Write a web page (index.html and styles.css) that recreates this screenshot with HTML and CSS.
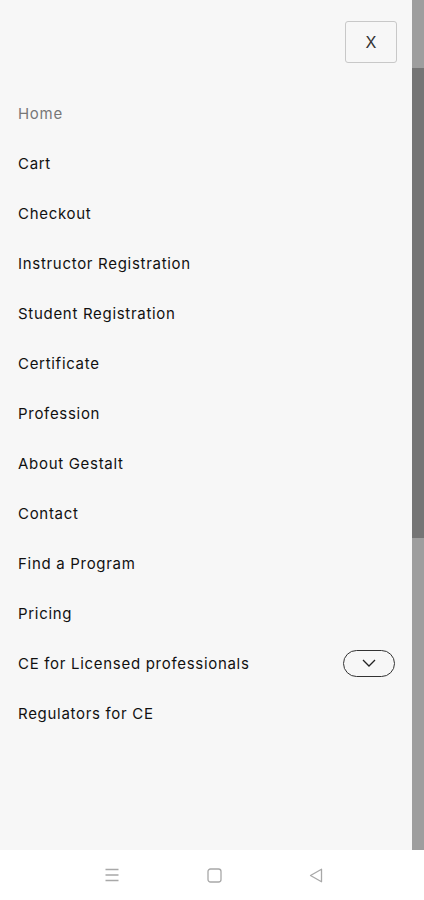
FILE: index.html
```html
<!DOCTYPE html>
<html lang="en">
<head>
    <meta charset="UTF-8">
    <meta name="viewport" content="width=device-width, initial-scale=1.0">
    <title>Menu</title>
    <link rel="stylesheet" href="styles.css">
</head>
<body>
  <div class="screen">
    <!-- Side menu -->
    <div class="menu">
      <div class="menu-header">
        <button class="close-btn">X</button>
      </div>
      <ul class="menu-list">
        <li class="active"><a href="#">Home</a></li>
        <li><a href="#">Cart</a></li>
        <li><a href="#">Checkout</a></li>
        <li><a href="#">Instructor Registration</a></li>
        <li><a href="#">Student Registration</a></li>
        <li><a href="#">Certificate</a></li>
        <li><a href="#">Profession</a></li>
        <li><a href="#">About Gestalt</a></li>
        <li><a href="#">Contact</a></li>
        <li><a href="#">Find a Program</a></li>
        <li><a href="#">Pricing</a></li>
        <li class="has-sub">
          <a href="#">CE for Licensed professionals</a>
          <span class="toggle">
            <svg width="14" height="8" viewBox="0 0 14 8"><path d="M1 1l6 6 6-6" fill="none" stroke="#222" stroke-width="1.3"/></svg>
          </span>
        </li>
        <li><a href="#">Regulators for CE</a></li>
      </ul>
    </div>
    <!-- Scrollbar -->
    <div class="scrollbar">
      <div class="thumb"></div>
    </div>
  </div>

  <!-- System nav -->
  <div class="sysnav">
    <svg width="16" height="14" viewBox="0 0 16 14"><path d="M1.5 1.5h13M1.5 7h13M1.5 12.5h13" stroke="#a8a8a8" stroke-width="1.4"/></svg>
    <svg width="15" height="15" viewBox="0 0 15 15"><rect x="1" y="1" width="13" height="13" rx="2.5" fill="none" stroke="#a8a8a8" stroke-width="1.3"/></svg>
    <svg width="14" height="15" viewBox="0 0 14 15"><path d="M12.5 1.2L1.5 7.5l11 6.3z" fill="none" stroke="#a8a8a8" stroke-width="1.3" stroke-linejoin="round"/></svg>
  </div>
</body>
</html>
```

FILE: styles.css
```css
body { margin: 0; background-color: #f7f7f7; font-family: Inter, "Noto Sans", sans-serif; color: #111; }
.screen { display: flex; height: 850px; }
.menu { flex: 1; }
.menu-header { display: flex; justify-content: flex-end; padding: 21px 15px 0 0; }
.close-btn { width: 52px; height: 42px; background: #f7f7f7; border: 1px solid #c8c8c8; border-radius: 3px; font-family: Inter, sans-serif; font-size: 16px; color: #333; cursor: pointer; }
.menu-list { list-style: none; margin: 25px 0 0; padding: 0 17px 0 18px; }
.menu-list li { display: flex; align-items: center; justify-content: space-between; height: 50px; }
.menu-list a { color: #111; text-decoration: none; font-size: 15px; letter-spacing: 0.7px; }
.menu-list li.active a { color: #777; }
.toggle { display: flex; justify-content: center; align-items: center; width: 50px; height: 25px; border: 1px solid #333; border-radius: 14px; }
.scrollbar { width: 12px; background-color: #9e9e9e; padding-top: 68px; }
.thumb { height: 470px; background-color: #757575; }
.sysnav { display: flex; justify-content: center; align-items: center; gap: 87px; height: 50px; background: #fff; padding-left: 2px; }
```
